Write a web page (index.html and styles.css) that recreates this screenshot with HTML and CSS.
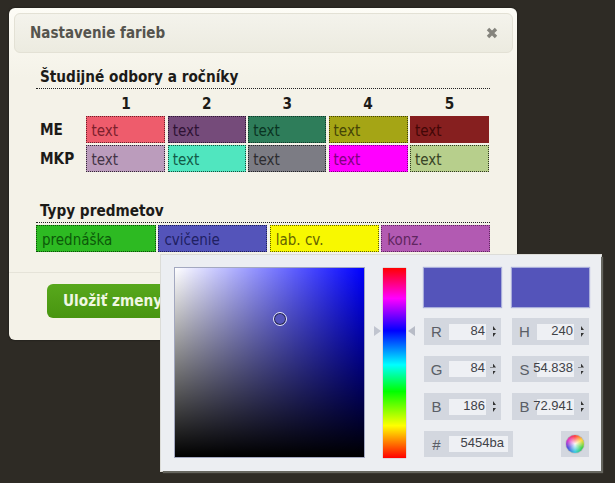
FILE: index.html
```html
<!DOCTYPE html>
<html lang="sk">
<head>
<meta charset="utf-8">
<title>Nastavenie farieb</title>
<link rel="stylesheet" href="styles.css">
</head>
<body>
<div class="dialog">
  <div class="titlebar">
    <span class="dialog-title">Nastavenie farieb</span>
    <svg class="close" width="12" height="12" viewBox="0 0 12 12"><path d="M2 2L10 10M10 2L2 10" stroke="#85847d" stroke-width="3.4" stroke-linecap="butt"/></svg>
  </div>
  <div class="content">
    <h2 class="section-title">Študijné odbory a ročníky</h2>
    <div class="grid">
      <div></div><div class="year">1</div><div class="year">2</div><div class="year">3</div><div class="year">4</div><div class="year">5</div>
      <div class="row-label">ME</div>
      <div class="cell c-red">text</div>
      <div class="cell c-purple">text</div>
      <div class="cell c-green">text</div>
      <div class="cell c-olive">text</div>
      <div class="cell c-maroon">text</div>
      <div class="row-label">MKP</div>
      <div class="cell c-lilac">text</div>
      <div class="cell c-aqua">text</div>
      <div class="cell c-gray">text</div>
      <div class="cell c-magenta">text</div>
      <div class="cell c-sage">text</div>
    </div>
    <h2 class="section-title second">Typy predmetov</h2>
    <div class="types">
      <div class="cell type c-lecture">prednáška</div>
      <div class="cell type c-exercise">cvičenie</div>
      <div class="cell type c-lab">lab. cv.</div>
      <div class="cell type c-consult">konz.</div>
    </div>
  </div>
  <div class="footer">
    <button class="save">Uložiť zmeny</button>
  </div>
</div>

<div class="picker">
  <div class="sb">
    <div class="sb-white"></div>
    <div class="sb-black"></div>
    <div class="sb-cursor"></div>
  </div>
  <div class="hue-wrap">
    <span class="arrow arrow-l"></span>
    <div class="hue"></div>
    <span class="arrow arrow-r"></span>
  </div>
  <div class="controls">
    <div class="swatch"></div>
    <div class="swatch"></div>
    <div class="field"><span class="fl">R</span><span class="fv">84</span><span class="spin"></span></div>
    <div class="field"><span class="fl">H</span><span class="fv">240</span><span class="spin"></span></div>
    <div class="field"><span class="fl">G</span><span class="fv">84</span><span class="spin"></span></div>
    <div class="field"><span class="fl">S</span><span class="fv">54.838</span><span class="spin"></span></div>
    <div class="field"><span class="fl">B</span><span class="fv">186</span><span class="spin"></span></div>
    <div class="field"><span class="fl">B</span><span class="fv">72.941</span><span class="spin"></span></div>
    <div class="bottom">
      <div class="field hex"><span class="fl">#</span><span class="fv">5454ba</span></div>
      <div class="wheel-box"><span class="wheel"></span></div>
    </div>
  </div>
</div>
</body>
</html>
```
FILE: styles.css
```css
* { box-sizing: border-box; }
html, body { height: 100%; }
body {
  margin: 0;
  padding: 8px 0 0 9px;
  background: #2e2b25;
  overflow: hidden;
  font-family: "DejaVu Sans Condensed", "DejaVu Sans", sans-serif;
}
.dialog {
  width: 508px;
  height: 332px;
  padding: 5px 4px 0 5px;
  background: linear-gradient(#fdfcf6, #f4f2e8 70px);
  border-radius: 6px;
  box-shadow: 0 0 2px rgba(0,0,0,.6);
}
.titlebar {
  height: 40px;
  display: flex;
  align-items: center;
  justify-content: space-between;
  padding: 0 14px 1px 15px;
  background: linear-gradient(#f4f3ec, #ecebe0);
  border: 1px solid #e3e1d5;
  border-radius: 6px;
}
.dialog-title {
  font-size: 15px;
  font-weight: 700;
  color: #55544e;
}
.close { display: block; }
.content {
  padding: 12px 23px 0 22px;
}
.section-title {
  margin: 0;
  height: 24px;
  padding-left: 4px;
  font-size: 15.2px;
  line-height: 24px;
  font-weight: 700;
  color: #1c1b18;
  border-bottom: 1px dotted #222;
  width: 454px;
}
.second { margin-top: 28px; height: 23px; line-height: 23px; }
.grid {
  display: grid;
  grid-template-columns: 48px 79px 78px 78px 79px 79px;
  grid-template-rows: 21px 27px 27px;
  column-gap: 2.4px;
  row-gap: 2px;
  width: 454px;
  margin-top: 4px;
}
.year {
  font-size: 15.2px;
  font-weight: 700;
  color: #1c1b18;
  text-align: center;
  line-height: 22px;
}
.row-label {
  padding-left: 4px;
  font-size: 15.2px;
  font-weight: 700;
  color: #1c1b18;
  line-height: 29px;
}
.cell {
  height: 27px;
  padding-left: 4px;
  font-family: "DejaVu Sans Condensed", "DejaVu Sans", sans-serif;
  font-size: 15px;
  line-height: 28px;
  border: 1px dotted #222;
}
.c-red { background: #ee5c6c; color: #7c1f2c; border-color: #6e2029; }
.c-purple { background: #754b7a; color: #2e1234; border-color: #2f1733; }
.c-green { background: #2e7d5a; color: #0a3322; border-color: #0e3828; }
.c-olive { background: #a5a515; color: #444406; border-color: #404005; }
.c-maroon { background: #861f1f; color: #420707; border-color: #861f1f; }
.c-lilac { background: #bb9cbc; color: #423345; border-color: #322735; }
.c-aqua { background: #50e6bf; color: #125a47; border-color: #134d3e; }
.c-gray { background: #7c7c84; color: #2c2c30; border-color: #232327; }
.c-magenta { background: #ff00ff; color: #800080; border-color: #800080; }
.c-sage { background: #b7cf8c; color: #384425; border-color: #2f3721; }
.types {
  display: grid;
  grid-template-columns: 120px 109px 109px 109px;
  column-gap: 2.4px;
  width: 454px;
  margin-top: 2px;
}
.type { padding-left: 5px; }
.c-lecture { background: #2dba22; color: #0c5809; border-color: #0b4c08; }
.c-exercise { background: #5454ba; color: #202062; border-color: #1f1f57; }
.c-lab { background: #f8f800; color: #636300; border-color: #5e5e00; }
.c-consult { background: #b25ab2; color: #602660; border-color: #602660; }
.footer {
  margin: 20px -4px 0 -5px;
  border-top: 1px solid #e5e3d8;
  padding: 11px 0 0 38px;
}
.save {
  display: block;
  width: 130px;
  height: 34px;
  padding: 0 0 0 16px;
  border: 0;
  border-radius: 6px;
  text-align: left;
  font-family: inherit;
  font-size: 15.2px;
  font-weight: 700;
  color: #f0f7e2;
  background: linear-gradient(#58a81c, #489510);
}
.picker {
  position: absolute;
  left: 161px;
  top: 255px;
  width: 440px;
  height: 216px;
  padding: 13px 12px 14px 14px;
  display: flex;
  background: #eceef2;
  box-shadow: 2px 2px 1px #66665f, 0 0 0 1px #dcdcd8;
  font-family: "Liberation Sans", Arial, sans-serif;
}
.sb {
  position: relative;
  width: 189px;
  height: 189px;
  flex: none;
  background: #0000ff;
  box-shadow: 0 0 0 1px #a3a8c0;
  overflow: hidden;
}
.sb-white, .sb-black { position: absolute; inset: 0; }
.sb-white { background: linear-gradient(to right, #fff, rgba(255,255,255,0)); }
.sb-black { background: linear-gradient(to bottom, rgba(0,0,0,0), #000); }
.sb-cursor {
  position: absolute;
  left: 98px;
  top: 44px;
  width: 14px;
  height: 14px;
  border-radius: 50%;
  background: #5454ba;
  border: 1px solid #e4e6fa;
  box-shadow: inset 0 0 0 1px #1f1f40;
}
.hue-wrap {
  flex: none;
  width: 60px;
  display: flex;
  align-items: flex-start;
  justify-content: center;
  gap: 2px;
}
.hue {
  width: 23px;
  height: 190px;
  background: linear-gradient(#ff0000 0%, #ff00ff 16%, #0000ff 33%, #00ffff 51%, #00ff00 65%, #ffff00 83%, #ff0000 100%);
  box-shadow: 0 0 1px #a06a6a;
}
.arrow {
  width: 0;
  height: 0;
  margin-top: 58px;
  border-top: 5.5px solid transparent;
  border-bottom: 5.5px solid transparent;
}
.arrow-l { border-left: 7px solid #c0c4cf; }
.arrow-r { border-right: 7px solid #b8bcc7; }
.controls {
  width: 165px;
  display: grid;
  grid-template-columns: 77px 77px;
  grid-template-rows: 39px 27px 26px 27px 26px;
  column-gap: 11px;
  row-gap: 11px;
  align-content: start;
}
.swatch {
  background: #5454ba;
  box-shadow: 0 0 1px 1px #a9aedb;
}
.field {
  display: flex;
  align-items: center;
  background: #d3d7df;
  font-size: 13px;
  color: #3f4248;
}
.fl {
  width: 25px;
  text-align: center;
  font-size: 15px;
  flex: none;
  color: #5a5e66;
}
.fv {
  display: flex;
  justify-content: flex-end;
  width: 37px;
  height: 16px;
  background: #eef0f4;
  padding-right: 1px;
  line-height: 13px;
  white-space: nowrap;
  flex: none;
}
.spin {
  width: 6px;
  height: 11px;
  margin-left: 4px;
  flex: none;
  background: linear-gradient(to bottom, #333 0 4px, transparent 4px 7px, #333 7px 11px);
  clip-path: polygon(50% 0, 100% 36%, 0 36%, 0 64%, 100% 64%, 50% 100%);
}
.bottom {
  grid-column: 1 / 3;
  display: flex;
  justify-content: space-between;
}
.hex { width: 89px; }
.hex .fv { width: 59px; padding-right: 4px; }
.wheel-box {
  width: 28px;
  height: 26px;
  background: #d3d7df;
  display: flex;
  align-items: center;
  justify-content: center;
}
.wheel {
  width: 18px;
  height: 18px;
  border-radius: 50%;
  background:
    radial-gradient(circle, rgba(255,255,255,.95) 0, rgba(255,255,255,0) 62%),
    conic-gradient(#ff3c3c, #ffd83a, #3ad24a, #3acbe0, #4a52e0, #e03ac6, #ff3c3c);
  box-shadow: 0 0 1px #444;
}
```
